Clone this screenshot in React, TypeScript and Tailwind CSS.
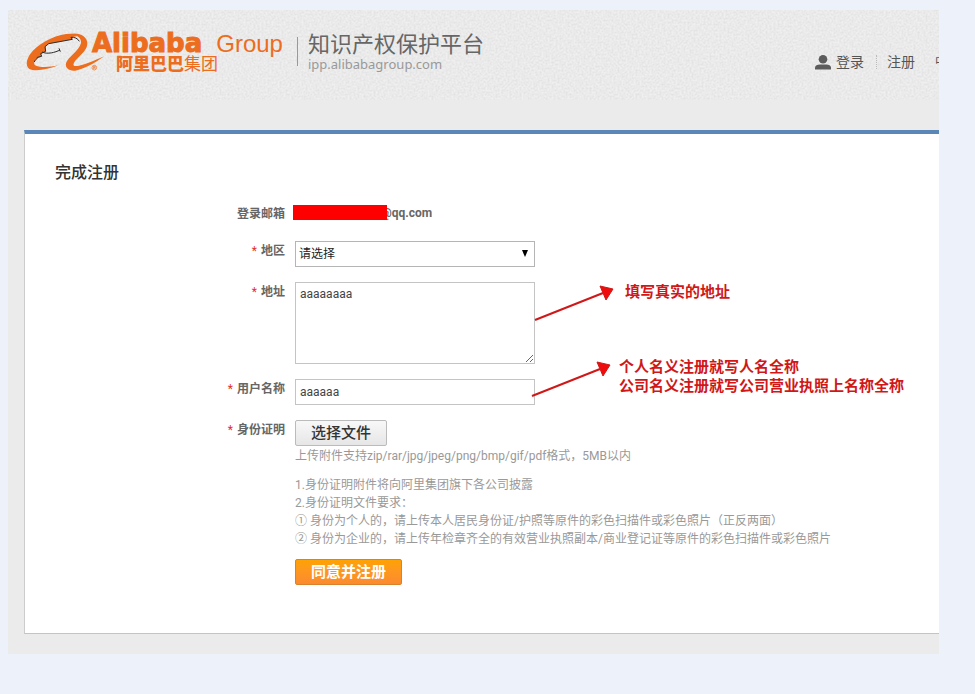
import React from 'react';

interface FormRowProps {
  label: string;
  htmlFor?: string;
  required?: boolean;
  children: React.ReactNode;
}

const UPLOAD_NOTES: string[] = [
  '1.身份证明附件将向阿里集团旗下各公司披露',
  '2.身份证明文件要求：',
  '① 身份为个人的，请上传本人居民身份证/护照等原件的彩色扫描件或彩色照片（正反两面）',
  '② 身份为企业的，请上传年检章齐全的有效营业执照副本/商业登记证等原件的彩色扫描件或彩色照片',
];

function HeaderTexture() {
  return (
    <svg className="absolute inset-0 w-full h-full opacity-20" aria-hidden="true">
      <filter id="grain" colorInterpolationFilters="sRGB">
        <feTurbulence type="fractalNoise" baseFrequency="0.5" numOctaves="2" seed="4" />
        <feColorMatrix values="0.5 0 0 0 0.66  0.5 0 0 0 0.66  0.5 0 0 0 0.66  0 0 0 0 1" />
      </filter>
      <rect width="100%" height="100%" filter="url(#grain)" />
    </svg>
  );
}

function LogoMark() {
  return (
    <svg viewBox="0 0 270 165" className="w-[90px] h-[55px] shrink-0" aria-hidden="true">
      {/* Head */}
      <path
        d="M153 26 C115 26 65 48 38 78 C20 98 14 121 28 132 C46 141 86 133 115 121 C91 126 63 128 48 122 C38 117 43 108 49 102 L64 94 L62 86 L77 79 L76 64 L86 56 L157 43 L154 37 L171 34 C167 28 162 26 153 26 Z"
        fill="#ec6d1e"
      />
      {/* Tail */}
      <path
        d="M150 27 C174 21 203 31 202 57 C201 79 172 96 162 113 C157 123 163 125 177 122 C201 117 226 105 253 94 C226 113 193 132 166 137 C147 139 135 129 138 115 C143 96 178 77 183 54 C185 39 172 30 150 27 Z"
        fill="#ec6d1e"
      />
      <path
        d="M43 111 C43 106 52 103 52 97 L65 94 L62 86 L77 79 L75 65 L86 56 L157 43 L153 37 C164 36 173 40 178 49"
        fill="none"
        stroke="#2b2b2b"
        strokeWidth="3"
      />
      <path d="M66 81 C82 89 106 82 120 75 M117 70 L121 80" fill="none" stroke="#2b2b2b" strokeWidth="3" />
      {/* Registered mark */}
      <circle cx="223" cy="128" r="7" fill="none" stroke="#ec6d1e" strokeWidth="2" />
      <path d="M221 132 V124 H224 C227 124 227 128 224 128 H221 M224 128 L226 132" fill="none" stroke="#ec6d1e" strokeWidth="2" />
    </svg>
  );
}

function UserIcon() {
  return (
    <svg viewBox="0 0 16 15" className="w-4 h-[15px]" fill="#5c5c5c" aria-hidden="true">
      <circle cx="8" cy="4.3" r="4.3" />
      <path d="M0 14.4 V12.6 C0 10.4 2.4 9.6 5 9.4 H11 C13.6 9.6 16 10.4 16 12.6 V14.4 Z" />
    </svg>
  );
}

function Arrow() {
  return (
    <svg viewBox="0 0 82 38" className="w-[82px] h-[38px] shrink-0" aria-hidden="true">
      <path d="M1 35 L69 8" stroke="#d01818" strokeWidth="2" />
      <path d="M66 1 L79 4 L72 15 Z" fill="#ee0c0c" stroke="#d01818" />
    </svg>
  );
}

function FormRow({ label, htmlFor, required, children }: FormRowProps) {
  return (
    <div className="flex gap-[10px]">
      <div className="w-[230px] shrink-0 text-right font-bold leading-[20px] text-[#666]">
        {required && <span className="mr-1 font-normal text-[#e03030]">*</span>}
        <label htmlFor={htmlFor}>{label}</label>
      </div>
      {children}
    </div>
  );
}

function Header() {
  return (
    <header className="relative flex items-start justify-between h-[90px] pl-3 overflow-hidden">
      <HeaderTexture />
      <a href="#" className="relative flex pt-[15px]">
        <LogoMark />
        <span className="-ml-[18px] pt-[6px] text-[#ec6d1e]">
          <span className="flex items-baseline gap-[14px] leading-[24px]">
            <span className="font-['DejaVu_Sans',sans-serif] text-[26px] font-bold [-webkit-text-stroke:1px_#ec6d1e]">Alibaba</span>
            <span className="font-['Liberation_Sans',sans-serif] text-[24px]">Group</span>
          </span>
          <span className="block pl-6 text-[17px] leading-[16px]">
            <b className="font-black">阿里巴巴</b>集团
          </span>
        </span>
        <span className="mt-3 ml-[14px] w-px h-[29px] bg-[#999]" />
        <span className="ml-[10px] pt-2 text-[#666]">
          <span className="block text-[22px] leading-[24px]">知识产权保护平台</span>
          <span className="block font-['Noto_Sans',sans-serif] text-[13px] leading-[14px] text-[#999]">ipp.alibabagroup.com</span>
        </span>
      </a>
      <nav className="relative flex items-center pt-[42px] text-[14px] leading-5 text-[#555]">
        <a href="#" className="flex items-center gap-[5px]">
          <UserIcon />
          登录
        </a>
        <span className="mx-3 h-[14px] border-l border-dotted border-[#bbb]" />
        <a href="#" className="-ml-[2px]">注册</a>
        <a href="#" className="ml-5 w-1 overflow-hidden whitespace-nowrap text-[12px]">中</a>
      </nav>
    </header>
  );
}

export default function App() {
  return (
    <div className="min-h-screen bg-[#edf2fa] pt-[10px] pb-10 pl-2 pr-9 font-['Roboto','Noto_Sans_CJK_SC',sans-serif] text-[12px]">
      <div className="bg-[#ebebeb] pb-5">
        <Header />

        <main className="mt-[30px] ml-4 px-[30px] pt-[26px] pb-12 bg-white border-t-4 border-t-[#5b87b8] border-l border-l-[#ccc] border-b border-b-[#c4c4c4]">
          <h1 className="mb-[18px] text-[16px] leading-[26px] font-medium text-[#333]">完成注册</h1>

          <form className="flex flex-col gap-[15px]" onSubmit={(e) => e.preventDefault()}>
            <FormRow label="登录邮箱">
              <div className="relative h-[22px] pl-[86px] font-bold leading-[18px] text-[#666]">
                @qq.com
                <span className="absolute top-px -left-[2px] w-[94px] h-[15px] bg-[#ff0000]" />
              </div>
            </FormRow>

            <FormRow label="地区" htmlFor="region" required>
              <div className="relative w-[240px]">
                <select
                  id="region"
                  className="block w-full h-[26px] pl-[3px] appearance-none bg-white border border-[#b5b5b5] text-[#222]"
                >
                  <option>请选择</option>
                </select>
                <svg viewBox="0 0 8 8" className="absolute top-[9px] right-[6px] w-2 h-2 pointer-events-none" aria-hidden="true">
                  <path d="M1 0 H7 L4 7 Z" fill="#000" />
                </svg>
              </div>
            </FormRow>

            <FormRow label="地址" htmlFor="address" required>
              <div className="relative w-[240px]">
                <textarea
                  id="address"
                  defaultValue="aaaaaaaa"
                  className="block w-full h-[82px] px-1 py-[2px] bg-white border border-[#c4c4c4] leading-[18px] text-[#444]"
                />
                <div className="absolute top-[3px] left-[239px]">
                  <Arrow />
                </div>
                <p className="absolute top-px left-[330px] whitespace-nowrap text-[15px] leading-[19px] font-bold text-[#d01818]">
                  填写真实的地址
                </p>
              </div>
            </FormRow>

            <FormRow label="用户名称" htmlFor="username" required>
              <div className="relative w-[240px]">
                <input
                  id="username"
                  type="text"
                  defaultValue="aaaaaa"
                  className="block w-full h-[26px] px-1 bg-white border border-[#c4c4c4] text-[#444]"
                />
                <div className="absolute -top-[18px] left-[236px]">
                  <Arrow />
                </div>
                <p className="absolute -top-[21px] left-[324px] whitespace-nowrap text-[15px] leading-[19px] font-bold text-[#d01818]">
                  个人名义注册就写人名全称
                  <br />
                  公司名义注册就写公司营业执照上名称全称
                </p>
              </div>
            </FormRow>

            <FormRow label="身份证明" htmlFor="identity" required>
              <div className="leading-[18px] text-[#999]">
                <button
                  id="identity"
                  type="button"
                  className="block w-[92px] h-[26px] rounded-[2px] border border-[#bbb] bg-linear-to-b from-[#f8f8f8] to-[#e6e6e6] text-[15px] font-medium text-[#333]"
                >
                  选择文件
                </button>
                <p className="mt-px">上传附件支持zip/rar/jpg/jpeg/png/bmp/gif/pdf格式，5MB以内</p>
                <div className="mt-[11px]">
                  {UPLOAD_NOTES.map((note) => (
                    <p key={note}>{note}</p>
                  ))}
                </div>
                <button
                  type="submit"
                  className="block mt-[11px] w-[107px] h-[26px] rounded-[2px] border border-[#d9822b] bg-linear-to-b from-[#ffa200] to-[#fb8a2e] text-[15px] font-bold text-white"
                >
                  同意并注册
                </button>
              </div>
            </FormRow>
          </form>
        </main>
      </div>
    </div>
  );
}
